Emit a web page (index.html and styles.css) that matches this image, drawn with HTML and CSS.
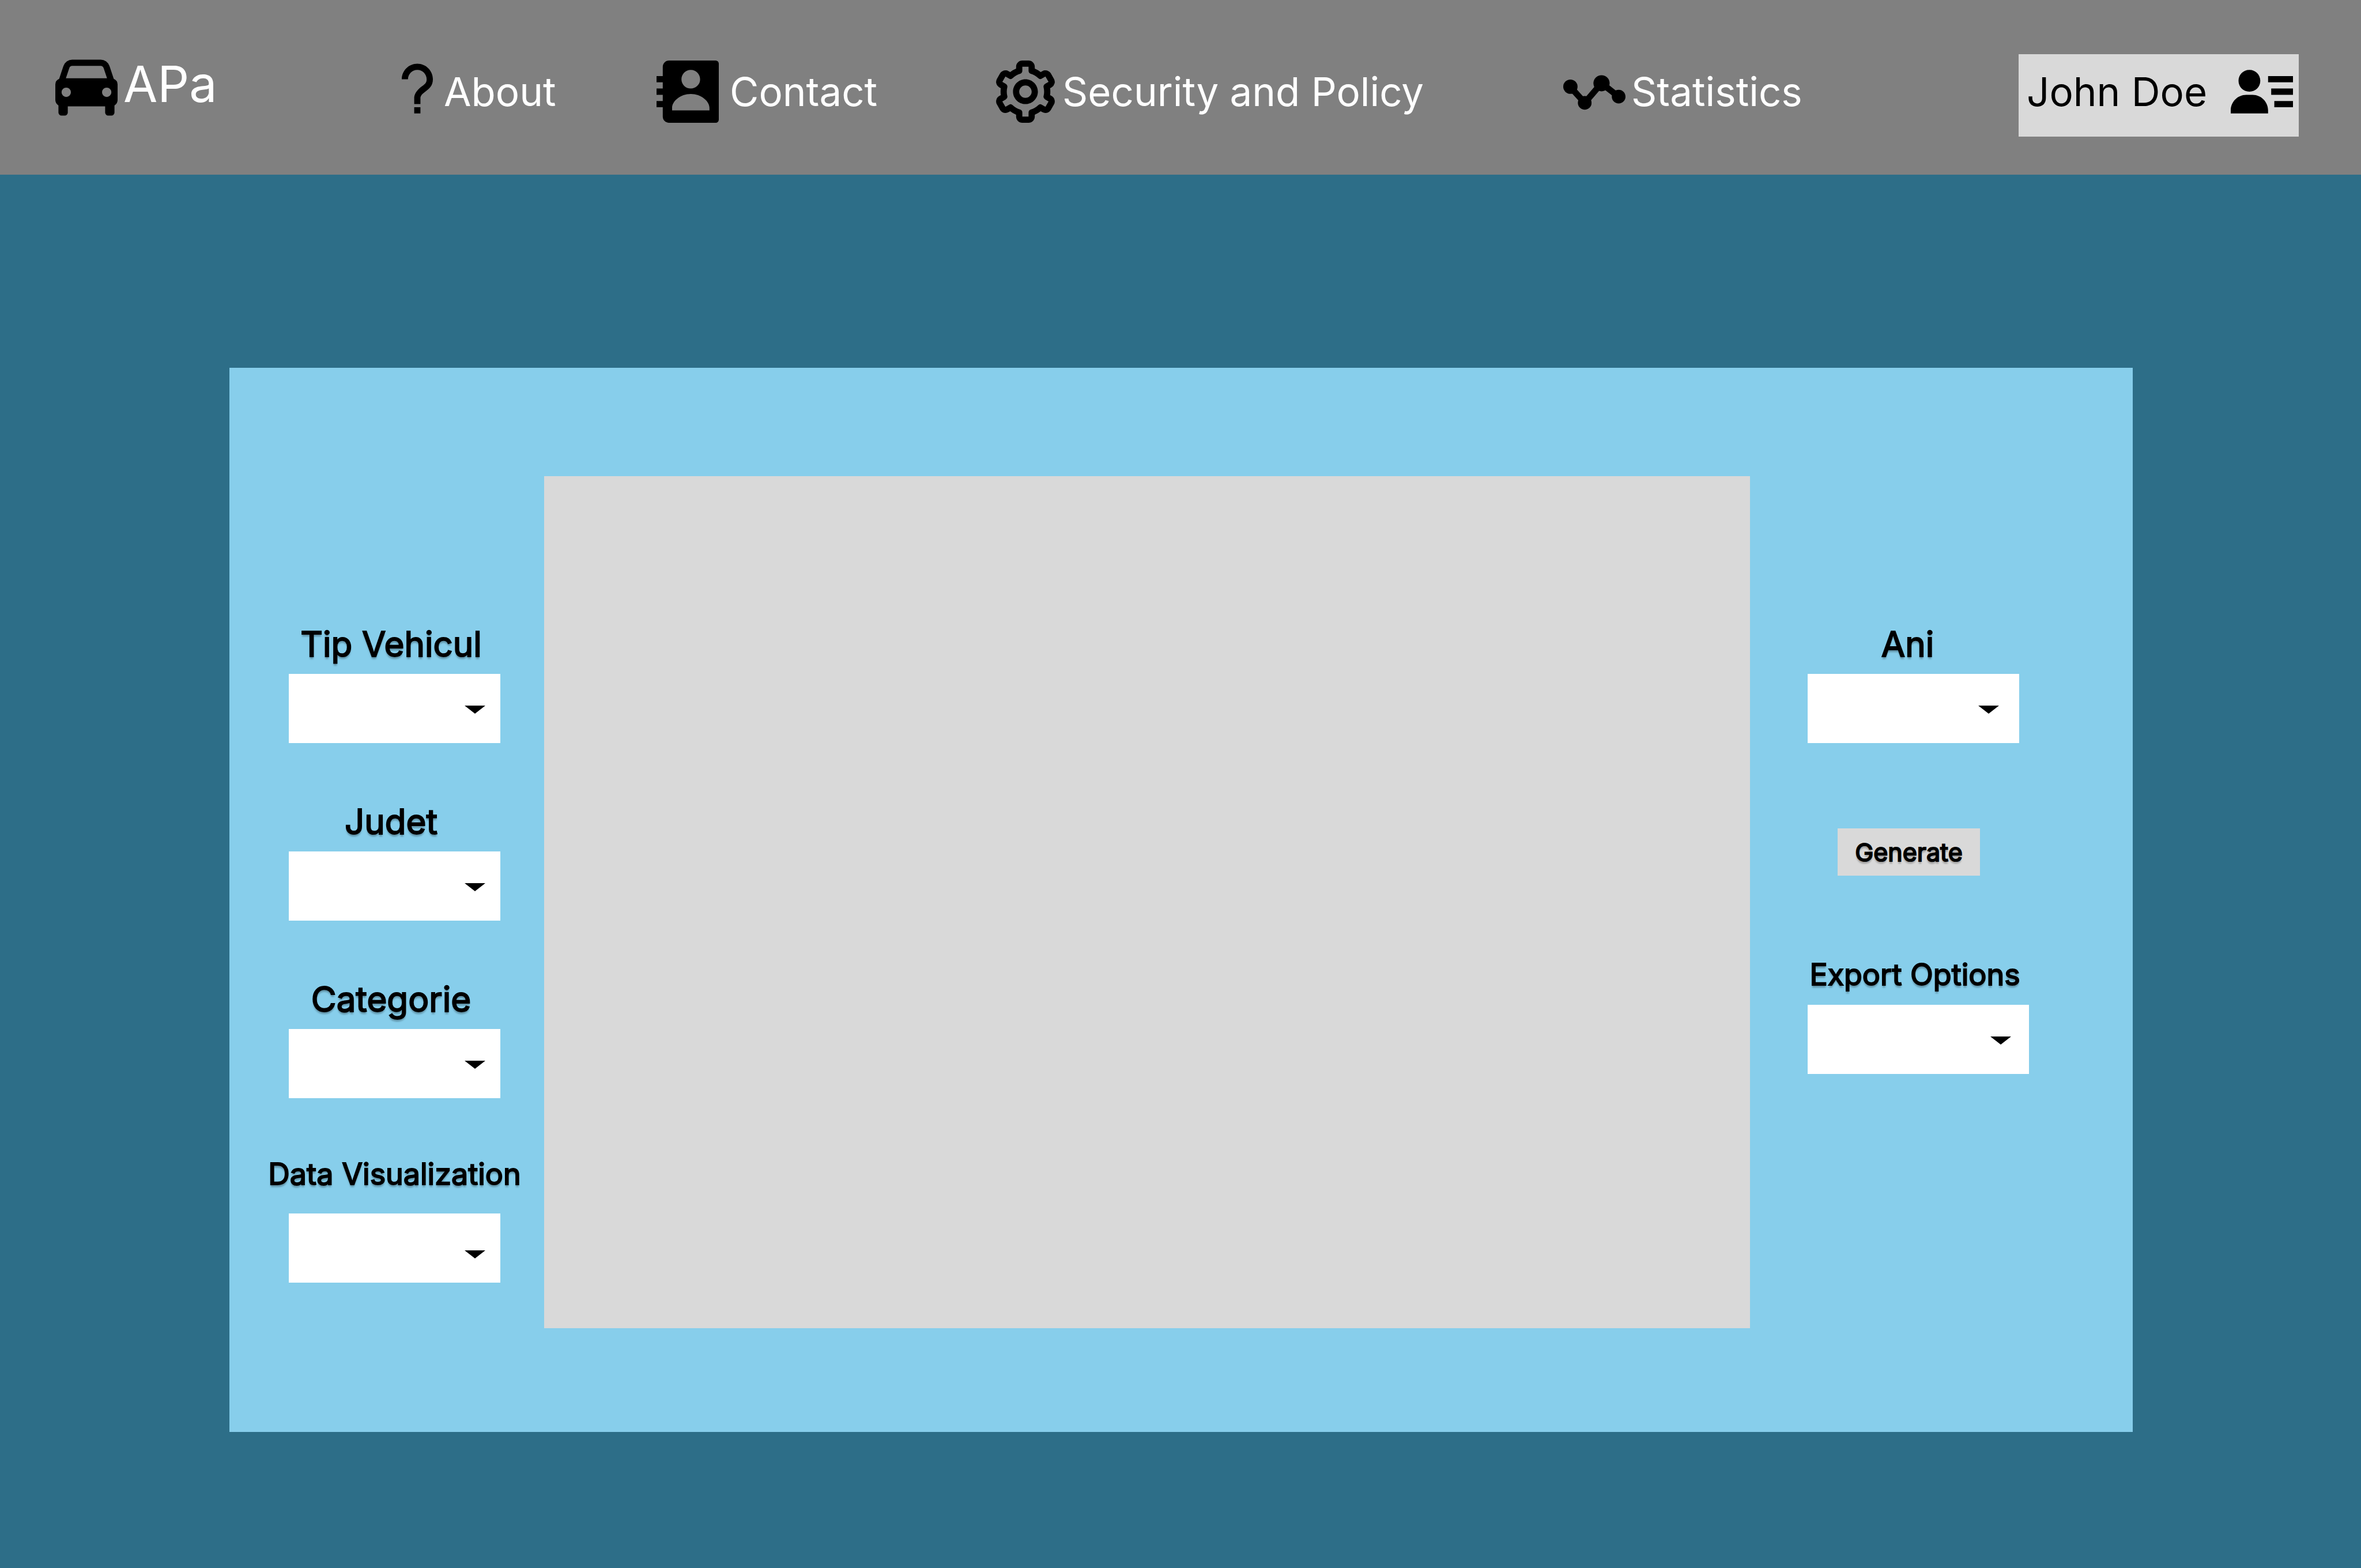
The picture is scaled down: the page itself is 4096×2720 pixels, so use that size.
FILE: index.html
```html
<!DOCTYPE html>
<html lang="en">
<head>
<meta charset="utf-8">
<meta name="viewport" content="width=device-width, initial-scale=1">
<title>APa</title>
<link rel="stylesheet" href="styles.css">
</head>
<body>
<header class="topbar">
  <a class="brand" href="#">
    <svg class="icon" viewBox="2 3 20 20" aria-hidden="true"><path d="m20.772 10.155-1.368-4.104A2.995 2.995 0 0 0 16.559 4H7.441a2.995 2.995 0 0 0-2.845 2.051l-1.368 4.104A2 2 0 0 0 2 12v5c0 .738.404 1.376 1 1.723V21a1 1 0 0 0 1 1h1a1 1 0 0 0 1-1v-2h12v2a1 1 0 0 0 1 1h1a1 1 0 0 0 1-1v-2.277A1.99 1.99 0 0 0 22 17v-5a2 2 0 0 0-1.228-1.845zM7.441 6h9.117c.431 0 .813.274.949.684L18.613 10H5.387l1.105-3.316A1 1 0 0 1 7.441 6zM5.5 16a1.5 1.5 0 1 1 .001-3.001A1.5 1.5 0 0 1 5.5 16zm13 0a1.5 1.5 0 1 1 .001-3.001A1.5 1.5 0 0 1 18.5 16z"/></svg>
    <span class="brand__name">APa</span>
  </a>
  <nav class="nav">
    <a class="nav__link nav__link--wide" href="#">
      <svg class="icon icon--narrow" viewBox="7 3 10 20" aria-hidden="true"><path d="M12 4C9.243 4 7 6.243 7 9h2c0-1.654 1.346-3 3-3s3 1.346 3 3c0 1.069-.454 1.465-1.481 2.255-.382.294-.813.626-1.226 1.038C10.981 13.604 10.995 14.897 11 15v2h2v-2.009c0-.024.023-.601.707-1.284.32-.32.682-.598 1.031-.867C15.798 12.024 17 11.1 17 9c0-2.757-2.243-5-5-5zm-1 14h2v2h-2z"/></svg>
      <span>About</span>
    </a>
    <a class="nav__link nav__link--wide" href="#">
      <svg class="icon" viewBox="2 2 20 20" aria-hidden="true"><path d="M21 2H6a2 2 0 0 0-2 2v3H2v2h2v2H2v2h2v2H2v2h2v3a2 2 0 0 0 2 2h15a1 1 0 0 0 1-1V3a1 1 0 0 0-1-1zm-8 2.999c1.648 0 3 1.351 3 3A3.012 3.012 0 0 1 13 11c-1.647 0-3-1.353-3-3.001 0-1.649 1.353-3 3-3zM19 18H7v-.75c0-2.219 2.705-4.5 6-4.5s6 2.281 6 4.5V18z"/></svg>
      <span>Contact</span>
    </a>
    <a class="nav__link" href="#">
      <svg class="icon" viewBox="2 2 20 20" aria-hidden="true"><path d="M12 16c2.206 0 4-1.794 4-4s-1.794-4-4-4-4 1.794-4 4 1.794 4 4 4zm0-6c1.084 0 2 .916 2 2s-.916 2-2 2-2-.916-2-2 .916-2 2-2z"/><path d="m2.845 16.136 1 1.73c.531.917 1.809 1.261 2.73.73l.529-.306A8.1 8.1 0 0 0 9 19.402V20c0 1.103.897 2 2 2h2c1.103 0 2-.897 2-2v-.598a8.132 8.132 0 0 0 1.896-1.111l.529.306c.923.53 2.198.188 2.731-.731l.999-1.729a2.001 2.001 0 0 0-.731-2.732l-.505-.292a7.718 7.718 0 0 0 0-2.224l.505-.292a2.002 2.002 0 0 0 .731-2.732l-.999-1.729c-.531-.92-1.808-1.265-2.731-.732l-.529.306A8.1 8.1 0 0 0 15 4.598V4c0-1.103-.897-2-2-2h-2c-1.103 0-2 .897-2 2v.598a8.132 8.132 0 0 0-1.896 1.111l-.529-.306c-.924-.531-2.2-.187-2.731.732l-.999 1.729a2.001 2.001 0 0 0 .731 2.732l.505.292a7.683 7.683 0 0 0 0 2.223l-.505.292a2.003 2.003 0 0 0-.731 2.733zm3.326-2.758A5.703 5.703 0 0 1 6 12c0-.462.058-.926.17-1.378a.999.999 0 0 0-.47-1.108l-1.123-.65.998-1.729 1.145.662a.997.997 0 0 0 1.188-.142 6.071 6.071 0 0 1 2.384-1.399A1 1 0 0 0 11 5.3V4h2v1.3a1 1 0 0 0 .708.956 6.083 6.083 0 0 1 2.384 1.399.999.999 0 0 0 1.188.142l1.144-.661 1 1.729-1.124.649a1 1 0 0 0-.47 1.108c.112.452.17.916.17 1.378 0 .461-.058.925-.171 1.378a1 1 0 0 0 .471 1.108l1.123.649-.998 1.729-1.145-.661a.996.996 0 0 0-1.188.142 6.071 6.071 0 0 1-2.384 1.399A1 1 0 0 0 13 18.7l.002 1.3H11v-1.3a1 1 0 0 0-.708-.956 6.083 6.083 0 0 1-2.384-1.399.992.992 0 0 0-1.188-.141l-1.144.662-1-1.729 1.124-.651a1 1 0 0 0 .471-1.108z"/></svg>
      <span>Security and Policy</span>
    </a>
    <a class="nav__link" href="#">
      <svg class="icon" viewBox="2 2 20 20" aria-hidden="true"><path d="M4.3 10.5 8.900 15.600 14.300 9.300 19.800 13.600" fill="none" stroke="#000" stroke-width="2"/><circle cx="4.300" cy="10.400" r="2.300"/><circle cx="8.900" cy="15.600" r="2.200"/><circle cx="14.300" cy="9.300" r="2.600"/><circle cx="19.800" cy="13.600" r="2.200"/></svg>
      <span>Statistics</span>
    </a>
  </nav>
  <button class="user" type="button">
    <span>John Doe</span>
    <svg class="icon" viewBox="2 2 20 20" aria-hidden="true"><path d="M15 11h7v2h-7zm1 4h6v2h-6zm-2-8h8v2h-8zM4 19h10v-1c0-2.757-2.243-5-5-5H7c-2.757 0-5 2.243-5 5v1h2zm4-7c1.995 0 3.500-1.505 3.500-3.500S9.995 5 8 5 4.500 6.505 4.500 8.500 6.005 12 8 12z"/></svg>
  </button>
</header>
<main class="panel">
  <form class="filters" id="filters">
    <div class="field">
      <label class="field__label" for="tip">Tip Vehicul</label>
      <select class="field__select" id="tip"><option></option></select>
    </div>
    <div class="field">
      <label class="field__label" for="judet">Judet</label>
      <select class="field__select" id="judet"><option></option></select>
    </div>
    <div class="field">
      <label class="field__label" for="categorie">Categorie</label>
      <select class="field__select" id="categorie"><option></option></select>
    </div>
    <div class="field field--spaced">
      <label class="field__label field__label--small" for="viz">Data Visualization</label>
      <select class="field__select field__select--low" id="viz"><option></option></select>
    </div>
  </form>
  <section class="chart" aria-label="Chart"></section>
  <div class="actions">
    <div class="field field--years">
      <label class="field__label" for="ani">Ani</label>
      <select class="field__select" id="ani" form="filters"><option></option></select>
    </div>
    <button class="generate" type="submit" form="filters">Generate</button>
    <div class="field field--export">
      <label class="field__label field__label--small" for="export">Export Options</label>
      <select class="field__select" id="export"><option></option></select>
    </div>
  </div>
</main>
</body>
</html>
```
FILE: styles.css
```css
*,
*::before,
*::after {
  box-sizing: border-box;
}

body {
  margin: 0;
  min-height: 100vh;
  background: #2d6e88;
  color: #000;
  font-family: Inter, "Liberation Sans", sans-serif;
  font-size: 69px;
  line-height: 84px;
}

a {
  color: #fff;
  text-decoration: none;
  white-space: nowrap;
}

button,
select {
  border: 0;
  border-radius: 0;
  color: inherit;
  font: inherit;
  cursor: pointer;
}

.icon {
  flex: none;
  width: 108px;
  height: 108px;
  margin: 0 2px;
  fill: #000;
}

.icon--narrow {
  width: 54px;
}

/* Top bar */
.topbar {
  display: grid;
  grid-template-columns: 601fr 2807fr 486px;
  align-items: start;
  padding: 94px 108px 66px 94px;
  background: #808080;
}

.brand {
  display: flex;
  align-items: center;
  gap: 8px;
  height: 116px;
}

.brand__name {
  padding-bottom: 12px;
  font-size: 86px;
  line-height: 104px;
}

.nav {
  display: grid;
  grid-template-columns: 442fr 586fr 987fr 792fr;
}

.nav__link {
  display: flex;
  align-items: center;
  gap: 8px;
  height: 130px;
}

.nav__link--wide {
  gap: 17px;
}

.user {
  display: flex;
  align-items: center;
  justify-content: space-between;
  height: 143px;
  padding: 0 8px 14px 14px;
  background: #d9d9d9;
  white-space: nowrap;
}

/* Panel with filters, chart area and actions */
.panel {
  display: grid;
  grid-template-columns: 546px 1fr 664px;
  margin: 335px 396px 235px 398px;
  padding: 188px 0 180px;
  background: #87ceeb;
}

.chart {
  min-height: 1478px;
  background: #d9d9d9;
}

.filters,
.actions {
  display: flex;
  flex-direction: column;
  padding-top: 255px;
}

.filters {
  gap: 100px;
  padding-left: 27px;
}

.actions {
  align-items: flex-start;
  padding-left: 100px;
}

.field {
  display: flex;
  flex-direction: column;
  align-items: center;
  gap: 16px;
}

.field--spaced {
  gap: 36px;
}

.field--export {
  gap: 20px;
  margin-top: 140px;
}

.field__label {
  padding-right: 12px;
  font-size: 60px;
  line-height: 72px;
  white-space: nowrap;
  -webkit-text-stroke: 2px #000;
  text-shadow: 0 4px 3px rgba(0, 0, 0, 0.3);
}

.field--years .field__label {
  padding-right: 20px;
}

.field__label--small {
  font-size: 52px;
  line-height: 64px;
}

.field--spaced .field__label {
  padding-right: 0;
}

.field__select {
  appearance: none;
  width: 367px;
  height: 120px;
  background: #fff url("data:image/svg+xml,%3Csvg xmlns='http://www.w3.org/2000/svg' viewBox='0 0 36 14'%3E%3Cpath d='M0 0h36L18 14z'/%3E%3C/svg%3E") no-repeat right 26px top 55px / 36px 14px;
}

.field__select--low {
  background-position: right 26px top 64px;
}

.field--years .field__select {
  background-position: right 35px top 55px;
}

.field--export .field__select {
  width: 384px;
  background-position: right 31px top 55px;
}

.generate {
  width: 247px;
  height: 82px;
  margin: 148px 0 0 52px;
  padding: 0;
  background: #d9d9d9;
  font-size: 43px;
  line-height: 52px;
  -webkit-text-stroke: 2px #000;
  text-shadow: 0 4px 3px rgba(0, 0, 0, 0.3);
}
```
